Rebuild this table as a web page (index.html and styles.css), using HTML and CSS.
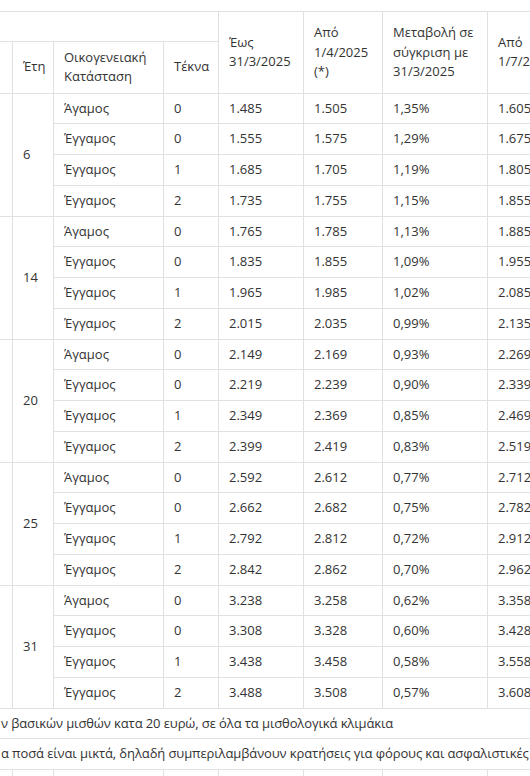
FILE: index.html
```html
<!DOCTYPE html>
<html lang="el">
<head>
<meta charset="utf-8">
<title>Μισθοί</title>
<link rel="stylesheet" href="styles.css">
</head>
<body>
<div class="viewport">
<table class="salary">
<colgroup>
<col class="c0"><col class="c1"><col class="c2"><col class="c3"><col class="c4"><col class="c5"><col class="c6"><col class="c7">
</colgroup>
<thead>
<tr class="h1"><th colspan="4">&nbsp;</th><th rowspan="2">Έως<br>31/3/2025</th><th rowspan="2">Από<br>1/4/2025<br>(*)</th><th rowspan="2">Μεταβολή σε<br>σύγκριση με<br>31/3/2025</th><th rowspan="2">Από<br>1/7/2025</th></tr>
<tr class="h2"><th></th><th>Έτη</th><th>Οικογενειακή<br>Κατάσταση</th><th>Τέκνα</th></tr>
</thead>
<tbody>
<tr><td rowspan="4"></td><td rowspan="4">6</td><td>Άγαμος</td><td>0</td><td>1.485</td><td>1.505</td><td>1,35%</td><td>1.605</td></tr>
<tr><td>Έγγαμος</td><td>0</td><td>1.555</td><td>1.575</td><td>1,29%</td><td>1.675</td></tr>
<tr><td>Έγγαμος</td><td>1</td><td>1.685</td><td>1.705</td><td>1,19%</td><td>1.805</td></tr>
<tr><td>Έγγαμος</td><td>2</td><td>1.735</td><td>1.755</td><td>1,15%</td><td>1.855</td></tr>
<tr><td rowspan="4"></td><td rowspan="4">14</td><td>Άγαμος</td><td>0</td><td>1.765</td><td>1.785</td><td>1,13%</td><td>1.885</td></tr>
<tr><td>Έγγαμος</td><td>0</td><td>1.835</td><td>1.855</td><td>1,09%</td><td>1.955</td></tr>
<tr><td>Έγγαμος</td><td>1</td><td>1.965</td><td>1.985</td><td>1,02%</td><td>2.085</td></tr>
<tr><td>Έγγαμος</td><td>2</td><td>2.015</td><td>2.035</td><td>0,99%</td><td>2.135</td></tr>
<tr><td rowspan="4"></td><td rowspan="4">20</td><td>Άγαμος</td><td>0</td><td>2.149</td><td>2.169</td><td>0,93%</td><td>2.269</td></tr>
<tr><td>Έγγαμος</td><td>0</td><td>2.219</td><td>2.239</td><td>0,90%</td><td>2.339</td></tr>
<tr><td>Έγγαμος</td><td>1</td><td>2.349</td><td>2.369</td><td>0,85%</td><td>2.469</td></tr>
<tr><td>Έγγαμος</td><td>2</td><td>2.399</td><td>2.419</td><td>0,83%</td><td>2.519</td></tr>
<tr><td rowspan="4"></td><td rowspan="4">25</td><td>Άγαμος</td><td>0</td><td>2.592</td><td>2.612</td><td>0,77%</td><td>2.712</td></tr>
<tr><td>Έγγαμος</td><td>0</td><td>2.662</td><td>2.682</td><td>0,75%</td><td>2.782</td></tr>
<tr><td>Έγγαμος</td><td>1</td><td>2.792</td><td>2.812</td><td>0,72%</td><td>2.912</td></tr>
<tr><td>Έγγαμος</td><td>2</td><td>2.842</td><td>2.862</td><td>0,70%</td><td>2.962</td></tr>
<tr><td rowspan="4"></td><td rowspan="4">31</td><td>Άγαμος</td><td>0</td><td>3.238</td><td>3.258</td><td>0,62%</td><td>3.358</td></tr>
<tr><td>Έγγαμος</td><td>0</td><td>3.308</td><td>3.328</td><td>0,60%</td><td>3.428</td></tr>
<tr><td>Έγγαμος</td><td>1</td><td>3.438</td><td>3.458</td><td>0,58%</td><td>3.558</td></tr>
<tr><td>Έγγαμος</td><td>2</td><td>3.488</td><td>3.508</td><td>0,57%</td><td>3.608</td></tr>
<tr class="note"><td colspan="8"><span class="note-text">ν βασικών μισθών κατα 20 ευρώ, σε όλα τα μισθολογικά κλιμάκια</span></td></tr>
<tr class="note"><td colspan="8"><span class="note-text">α ποσά είναι μικτά, δηλαδή συμπεριλαμβάνουν κρατήσεις για φόρους και ασφαλιστικές εισφορές</span></td></tr>
<tr><td>&nbsp;</td><td></td><td></td><td></td><td></td><td></td><td></td><td></td></tr>
</tbody>
</table>
</div>
</body>
</html>
```

FILE: styles.css
```css
html, body {
  margin: 0;
  padding: 0;
  background: #fff;
}

.viewport {
  width: 530px;
  height: 776px;
  overflow: hidden;
  padding-top: 11px;
  box-sizing: border-box;
}

.salary {
  margin-left: -88px;
  border-collapse: collapse;
  table-layout: fixed;
  width: 718px;
  font-family: "Open Sans", "Noto Sans", "DejaVu Sans", sans-serif;
  font-size: 13px;
  line-height: 19.5px;
  color: #333;
}

.c0 { width: 100px; }
.c1 { width: 41px; }
.c2 { width: 110px; }
.c3 { width: 55px; }
.c4 { width: 85px; }
.c5 { width: 79px; }
.c6 { width: 105px; }
.c7 { width: 143px; }

.salary th,
.salary td {
  border: 1px solid #e1e1e1;
  padding: 5.125px 10px;
  text-align: left;
  vertical-align: middle;
  font-weight: normal;
  white-space: nowrap;
  overflow: hidden;
}

.salary .h1 th { padding: 4.5px 10px; }
.salary .h2 th { padding: 6px 10px; }

.salary .note td {
  padding-left: 88px;
  overflow: hidden;
}

.note-text {
  display: block;
  white-space: nowrap;
  letter-spacing: -0.1px;
}
```
